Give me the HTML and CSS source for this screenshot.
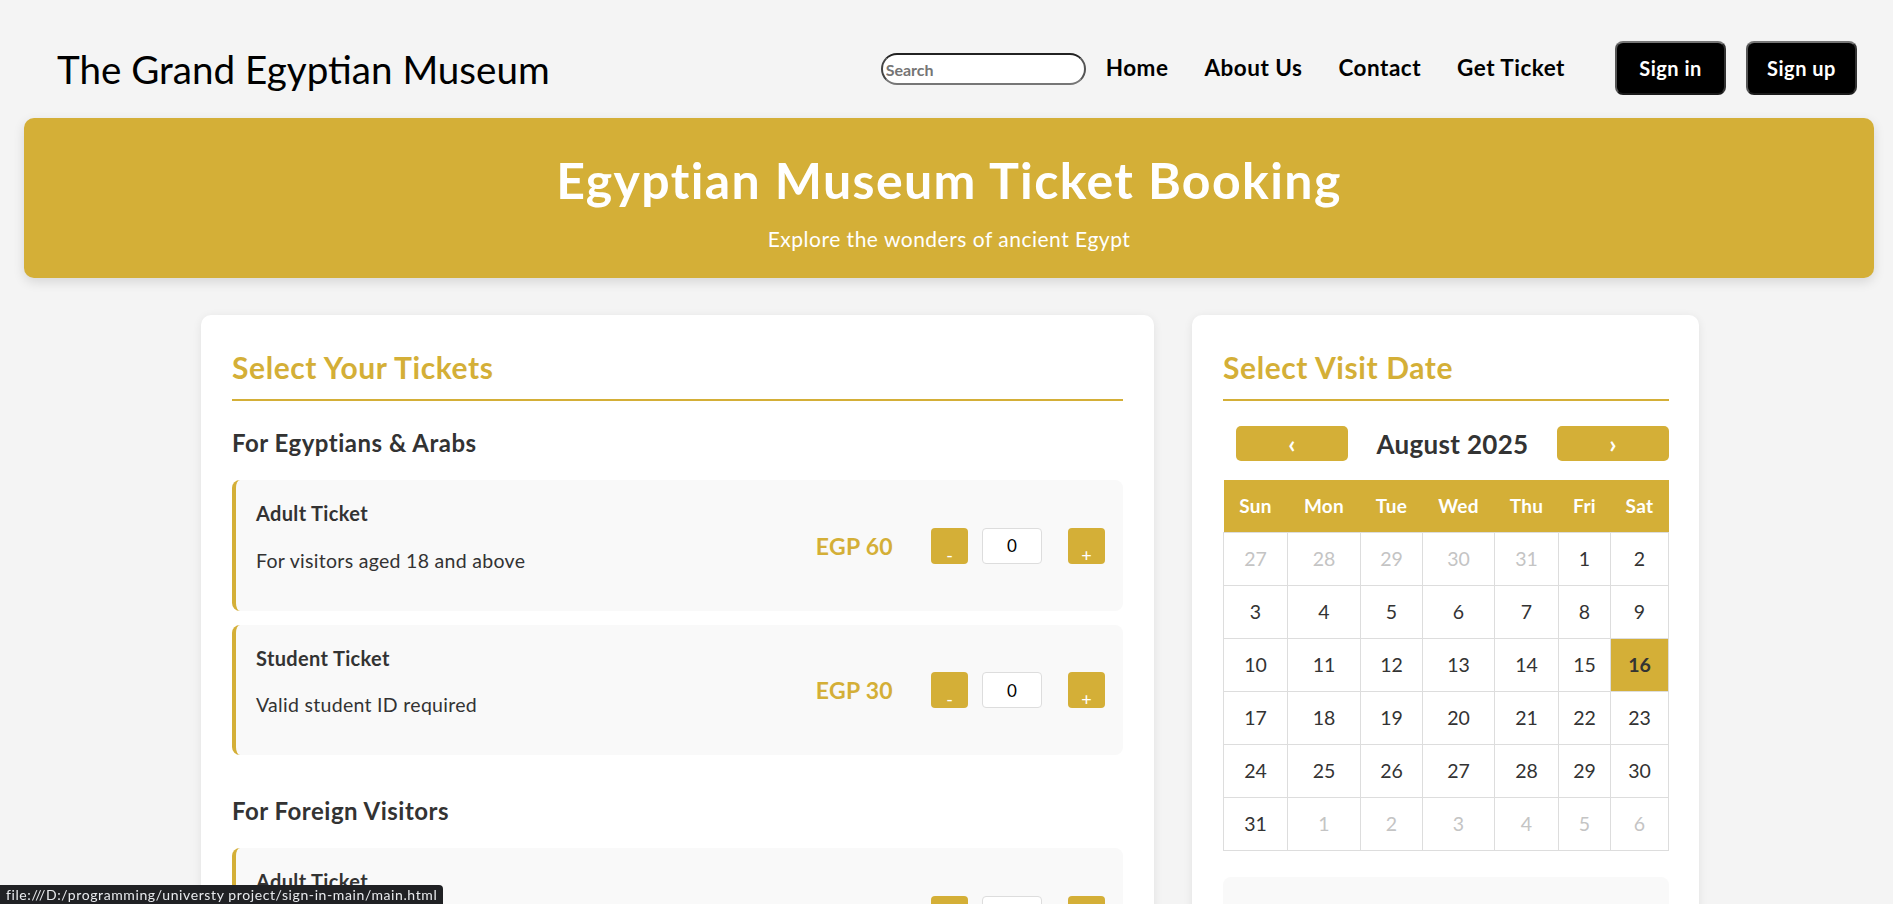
FILE: index.html
```html
<!DOCTYPE html>
<html lang="en">
<head>
<meta charset="utf-8">
<title>Egyptian Museum Ticket Booking</title>
<link rel="stylesheet" href="styles.css">
</head>
<body>
<header class="site-header">
  <h1 class="logo">The Grand Egyptian Museum</h1>
  <nav class="nav">
    <input class="search" type="text" placeholder="Search">
    <a class="nav-link" href="#">Home</a>
    <a class="nav-link" href="#">About Us</a>
    <a class="nav-link" href="#">Contact</a>
    <a class="nav-link nav-link-last" href="#">Get Ticket</a>
    <div class="auth">
      <button class="btn-dark">Sign in</button>
      <button class="btn-dark">Sign up</button>
    </div>
  </nav>
</header>

<section class="hero">
  <h1>Egyptian Museum Ticket Booking</h1>
  <p>Explore the wonders of ancient Egypt</p>
</section>

<main class="booking">
  <section class="card tickets">
    <h2 class="card-title">Select Your Tickets</h2>

    <div class="group">
      <h3 class="group-title">For Egyptians &amp; Arabs</h3>
      <div class="items">
        <div class="ticket">
          <div class="ticket-info">
            <h4>Adult Ticket</h4>
            <p>For visitors aged 18 and above</p>
          </div>
          <div class="ticket-controls">
            <span class="price">EGP 60</span>
            <button class="qty-btn">-</button>
            <input class="qty" type="text" value="0">
            <button class="qty-btn">+</button>
          </div>
        </div>
        <div class="ticket">
          <div class="ticket-info">
            <h4>Student Ticket</h4>
            <p>Valid student ID required</p>
          </div>
          <div class="ticket-controls">
            <span class="price">EGP 30</span>
            <button class="qty-btn">-</button>
            <input class="qty" type="text" value="0">
            <button class="qty-btn">+</button>
          </div>
        </div>
      </div>
    </div>

    <div class="group">
      <h3 class="group-title">For Foreign Visitors</h3>
      <div class="items">
        <div class="ticket">
          <div class="ticket-info">
            <h4>Adult Ticket</h4>
            <p>For visitors aged 18 and above</p>
          </div>
          <div class="ticket-controls">
            <span class="price">EGP 200</span>
            <button class="qty-btn">-</button>
            <input class="qty" type="text" value="0">
            <button class="qty-btn">+</button>
          </div>
        </div>
        <div class="ticket">
          <div class="ticket-info">
            <h4>Student Ticket</h4>
            <p>Valid student ID required</p>
          </div>
          <div class="ticket-controls">
            <span class="price">EGP 100</span>
            <button class="qty-btn">-</button>
            <input class="qty" type="text" value="0">
            <button class="qty-btn">+</button>
          </div>
        </div>
      </div>
    </div>
  </section>

  <aside class="card date">
    <h2 class="card-title">Select Visit Date</h2>
    <div class="cal-nav">
      <button class="cal-btn">&#8249;</button>
      <span class="cal-month">August 2025</span>
      <button class="cal-btn">&#8250;</button>
    </div>
    <table class="calendar">
      <thead>
        <tr><th>Sun</th><th>Mon</th><th>Tue</th><th>Wed</th><th>Thu</th><th>Fri</th><th>Sat</th></tr>
      </thead>
      <tbody>
        <tr><td class="muted">27</td><td class="muted">28</td><td class="muted">29</td><td class="muted">30</td><td class="muted">31</td><td>1</td><td>2</td></tr>
        <tr><td>3</td><td>4</td><td>5</td><td>6</td><td>7</td><td>8</td><td>9</td></tr>
        <tr><td>10</td><td>11</td><td>12</td><td>13</td><td>14</td><td>15</td><td class="selected">16</td></tr>
        <tr><td>17</td><td>18</td><td>19</td><td>20</td><td>21</td><td>22</td><td>23</td></tr>
        <tr><td>24</td><td>25</td><td>26</td><td>27</td><td>28</td><td>29</td><td>30</td></tr>
        <tr><td>31</td><td class="muted">1</td><td class="muted">2</td><td class="muted">3</td><td class="muted">4</td><td class="muted">5</td><td class="muted">6</td></tr>
      </tbody>
    </table>
    <div class="summary">
      <h3>Booking Summary</h3>
      <p>No tickets selected</p>
    </div>
  </aside>
</main>

<div class="status-bubble">file:///D:/programming/universty project/sign-in-main/main.html</div>
</body>
</html>
```

FILE: styles.css
```css
* {
  box-sizing: border-box;
}

body {
  margin: 0;
  background: #f4f4f4;
  font-family: "Lato", "Segoe UI", sans-serif;
  line-height: 1.33;
  color: #333;
}

/* Header */
.site-header {
  display: flex;
  justify-content: space-between;
  align-items: center;
  height: 118px;
  padding: 20px 36px 0 57px;
}

.logo {
  margin: 2px 0 0;
  font-size: 38.6px;
  font-weight: 400;
  color: #000;
}

.nav {
  display: flex;
  align-items: center;
}

.search {
  width: 205px;
  height: 32px;
  margin-right: 20px;
  padding: 0 3px;
  border: 2px solid;
  border-color: #222 #555 #767676 #444;
  border-radius: 16px;
  background: #fff;
  font: 700 16px "Lato", sans-serif;
  color: #333;
}

.search::placeholder {
  color: #757575;
}

.nav-link {
  margin: 0 36px 3px 0;
  font-size: 22.5px;
  font-weight: 700;
  letter-spacing: 0.5px;
  color: #000;
  text-decoration: none;
}

.nav-link-last {
  margin-right: 50px;
}

.auth {
  display: flex;
  gap: 20px;
  margin-bottom: 3px;
}

.btn-dark {
  width: 111px;
  height: 54px;
  background: #000;
  color: #fff;
  border: 2px solid;
  border-color: #767676 #333 #1a1a1a #555;
  border-radius: 8px;
  font: 700 20px "Lato", sans-serif;
  letter-spacing: 0.5px;
}

/* Hero */
.hero {
  margin: 0 19px 0 24px;
  padding: 29px 20px 26px;
  background: #d4af37;
  border-radius: 10px;
  box-shadow: 0 4px 12px rgba(0, 0, 0, 0.12);
  text-align: center;
  color: #fff;
}

.hero h1 {
  margin: 0 0 11px;
  font-size: 50px;
  font-weight: 700;
  letter-spacing: 1.4px;
}

.hero p {
  margin: 0;
  font-size: 21px;
  letter-spacing: 0.5px;
}

/* Booking layout */
.booking {
  display: grid;
  grid-template-columns: 953fr 507fr;
  gap: 38px;
  align-items: start;
  margin: 37px 194px 0 201px;
}

.card {
  background: #fff;
  border-radius: 10px;
  box-shadow: 0 2px 10px rgba(0, 0, 0, 0.08);
  padding: 33px 31px 40px;
}

.card.date {
  padding-right: 30px;
}

.card-title {
  margin: 0;
  padding-bottom: 11px;
  border-bottom: 2px solid #d4af37;
  font-size: 30px;
  font-weight: 700;
  letter-spacing: 0.6px;
  color: #d4af37;
}

/* Tickets */
.group {
  margin-top: 26px;
}

.group + .group {
  margin-top: 40px;
}

.group-title {
  margin: 0 0 21px;
  font-size: 24px;
  font-weight: 700;
  letter-spacing: 0.5px;
  color: #333;
}

.items {
  display: flex;
  flex-direction: column;
  gap: 14px;
}

.ticket {
  display: flex;
  justify-content: space-between;
  align-items: center;
  padding: 20px 18px 19px 20px;
  background: #f9f9f9;
  border-left: 4px solid #d4af37;
  border-radius: 8px;
}

.ticket-info h4 {
  margin: 0 0 21px;
  font-size: 20px;
  font-weight: 700;
  letter-spacing: 0.35px;
  color: #333;
}

.ticket-info p {
  margin: 0 0 18px;
  font-size: 19.5px;
  letter-spacing: 0.3px;
  color: #333;
}

.ticket-controls {
  display: flex;
  align-items: center;
}

.price {
  margin-right: 38px;
  font-size: 23px;
  font-weight: 700;
  letter-spacing: 0.3px;
  color: #d4af37;
}

.qty-btn {
  display: flex;
  align-items: flex-end;
  justify-content: center;
  width: 37px;
  height: 36px;
  padding: 0;
  border: none;
  border-radius: 4px;
  background: #d4af37;
  color: #fff;
  font: 400 18px/1 "Lato", sans-serif;
}

.qty {
  width: 60px;
  height: 36px;
  margin: 0 26px 0 14px;
  border: 1px solid #ddd;
  border-radius: 4px;
  background: #fff;
  text-align: center;
  font: 400 17px "Lato", sans-serif;
  color: #000;
}

/* Calendar */
.cal-nav {
  display: flex;
  justify-content: space-between;
  align-items: center;
  margin-top: 25px;
  padding-left: 13px;
}

.cal-btn {
  width: 112px;
  height: 35px;
  padding: 0;
  border: none;
  border-radius: 5px;
  background: #d4af37;
  color: #fff;
  font: 700 25px/1 "Lato", sans-serif;
}

.cal-month {
  font-size: 26px;
  font-weight: 700;
  letter-spacing: 0.3px;
  color: #333;
}

.calendar {
  width: 100%;
  margin-top: 19px;
  border-collapse: collapse;
  table-layout: fixed;
  text-align: center;
}

.calendar th {
  height: 52px;
  padding: 0;
  background: #d4af37;
  color: #fff;
  font-size: 19px;
  font-weight: 700;
  letter-spacing: 0.3px;
}

.calendar th:nth-child(1) { width: 64px; }
.calendar th:nth-child(2) { width: 73px; }
.calendar th:nth-child(3) { width: 62px; }
.calendar th:nth-child(4) { width: 72px; }
.calendar th:nth-child(5) { width: 64px; }
.calendar th:nth-child(6) { width: 52px; }
.calendar th:nth-child(7) { width: 58px; }

.calendar td {
  height: 53px;
  padding: 0;
  border: 1px solid #ddd;
  font-size: 19.5px;
  color: #333;
}

.calendar td.muted {
  color: #c4c4c4;
}

.calendar td.selected {
  background: #d4af37;
  font-weight: 700;
  color: #333;
}

.summary {
  margin-top: 26px;
  padding: 30px 20px 20px;
  min-height: 220px;
  background: #f9f9f9;
  border-radius: 8px;
}

.summary h3 {
  margin: 0 0 12px;
  font-size: 22px;
  color: #333;
}

.summary p {
  margin: 0;
  font-size: 18px;
}

/* Browser status bubble */
.status-bubble {
  position: fixed;
  left: 0;
  bottom: 0;
  height: 19px;
  padding: 0 6px;
  background: #202124;
  border-top-right-radius: 4px;
  color: #e8eaed;
  font-size: 14px;
  letter-spacing: 0.6px;
  line-height: 19px;
  white-space: nowrap;
}
```
